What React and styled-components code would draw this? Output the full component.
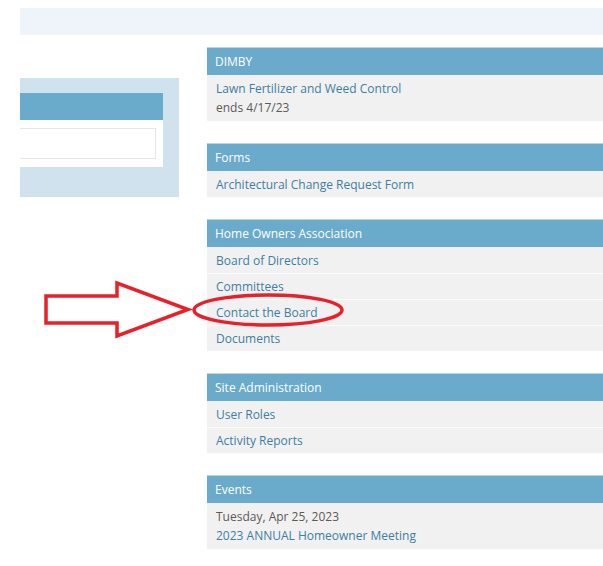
import React from "react";
import styled, { createGlobalStyle } from "styled-components";

const GlobalStyle = createGlobalStyle`
  html, body {
    margin: 0;
    padding: 0;
    background: #fff;
  }
  body {
    font-family: "Open Sans", "Liberation Sans", sans-serif;
    font-size: 12px;
    color: #555;
  }
`;

const Page = styled.div`
  position: relative;
  width: 603px;
  height: 566px;
  overflow: hidden;
  padding: 8px 0 0 20px;
  box-sizing: border-box;
`;

const TopBar = styled.div`
  height: 27px;
  width: 600px;
  background: #eef4f9;
`;

const Columns = styled.div`
  display: flex;
  gap: 28px;
  margin-top: 12px;
`;

const LeftCol = styled.div`
  width: 159px;
  flex-shrink: 0;
  padding-top: 31px;
`;

// light blue frame around the search widget
const Widget = styled.div`
  background: #cfe2ee;
  padding: 15px 16px 30px 0;
`;

const WidgetHead = styled.div`
  height: 27px;
  background: #6aaacb;
`;

const WidgetBody = styled.div`
  background: #fff;
  padding: 8px 7px 8px 0;
`;

const SearchBox = styled.div`
  height: 29px;
  border: 1px solid #e6e6e6;
  border-left: none;
  background: #fff;
`;

const RightCol = styled.div`
  width: 420px;
  flex-shrink: 0;
  display: flex;
  flex-direction: column;
  gap: 22px;
`;

const Panel = styled.section`
  background: #f1f1f1;
`;

const PanelHead = styled.div`
  height: 27px;
  line-height: 27px;
  padding: 0 8px;
  background: #6aaacb;
  border-top: 1px solid #b9d6e6;
  color: #fff;
  font-size: 12px;
`;

const Row = styled.div`
  padding: ${(p) => (p.$block ? "3px 9px 4px" : "0 9px")};
  height: ${(p) => (p.$block ? "auto" : "25px")};
  line-height: ${(p) => (p.$block ? "19px" : "25px")};
  border-top: 1px solid ${(p) => (p.$first ? "#f1f1f1" : "#fafafa")};
  font-size: 12px;
`;

const Link = styled.div`
  color: #3d7ea3;
`;

const Note = styled.div`
  color: #5a5a5a;
`;

// red arrow + ellipse drawn on top of the sidebar
const Markup = styled.svg`
  position: absolute;
  left: 0;
  top: 0;
  pointer-events: none;
`;

const links = (items) =>
  items.map((t, i) => (
    <Row key={t} $first={i === 0}>
      <Link>{t}</Link>
    </Row>
  ));

export default function App() {
  return (
    <>
      <GlobalStyle />
      <Page>
        <TopBar />
        <Columns>
          <LeftCol>
            <Widget>
              <WidgetHead />
              <WidgetBody>
                <SearchBox />
              </WidgetBody>
            </Widget>
          </LeftCol>
          <RightCol>
            <Panel>
              <PanelHead>DIMBY</PanelHead>
              <Row $first $block>
                <Link>Lawn Fertilizer and Weed Control</Link>
                <Note>ends 4/17/23</Note>
              </Row>
            </Panel>
            <Panel>
              <PanelHead>Forms</PanelHead>
              {links(["Architectural Change Request Form"])}
            </Panel>
            <Panel>
              <PanelHead>Home Owners Association</PanelHead>
              {links([
                "Board of Directors",
                "Committees",
                "Contact the Board",
                "Documents",
              ])}
            </Panel>
            <Panel>
              <PanelHead>Site Administration</PanelHead>
              {links(["User Roles", "Activity Reports"])}
            </Panel>
            <Panel>
              <PanelHead>Events</PanelHead>
              <Row $first $block>
                <Note>Tuesday, Apr 25, 2023</Note>
                <Link>2023 ANNUAL Homeowner Meeting</Link>
              </Row>
            </Panel>
          </RightCol>
        </Columns>
        <Markup width="603" height="566" viewBox="0 0 603 566">
          <path
            d="M46 296 L117 296 L117 283 L188 309.5 L117 336 L117 323 L46 323 Z"
            fill="#fff"
            stroke="#e8202a"
            strokeWidth="3.5"
            strokeLinejoin="miter"
          />
          <ellipse
            cx="268"
            cy="310"
            rx="74"
            ry="15"
            fill="none"
            stroke="#e8202a"
            strokeWidth="3.5"
          />
        </Markup>
      </Page>
    </>
  );
}
